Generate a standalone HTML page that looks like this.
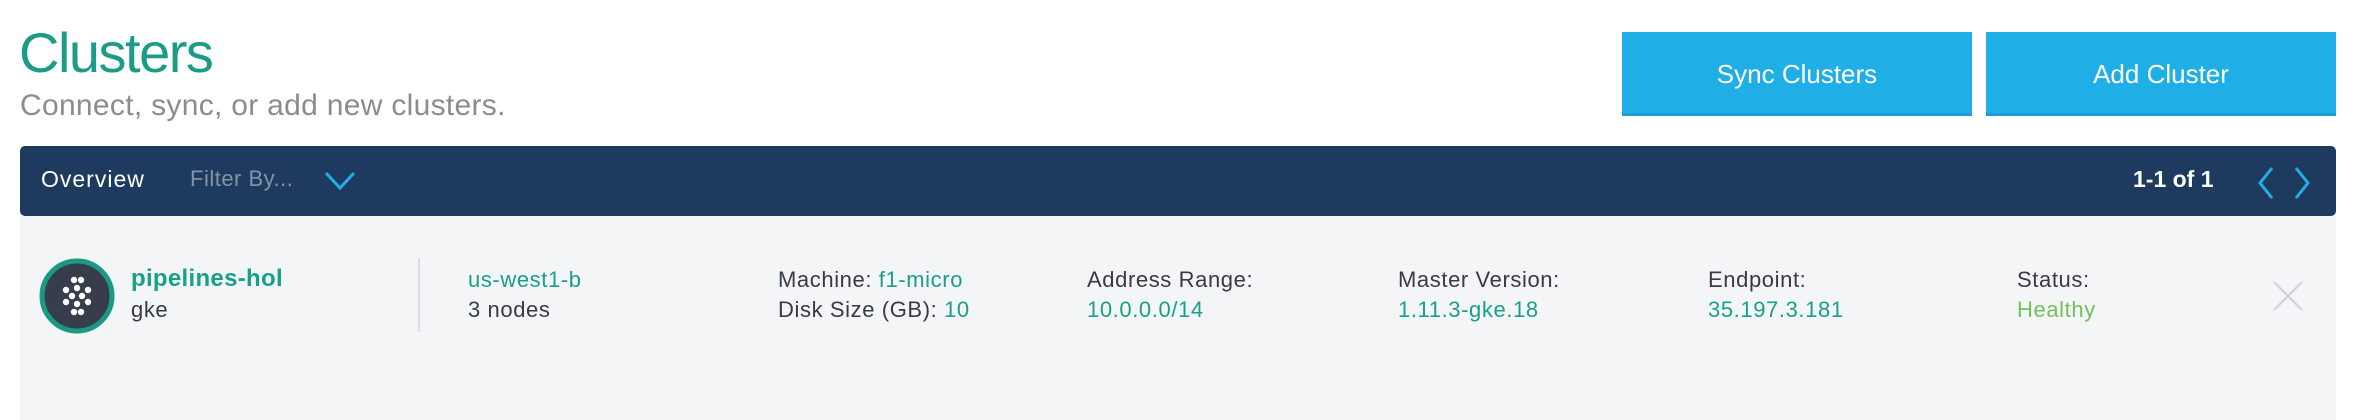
<!DOCTYPE html>
<html><head><meta charset="utf-8"><style>
*{margin:0;padding:0;box-sizing:border-box}
body{width:2360px;height:420px;background:#fff;font-family:"Liberation Sans","DejaVu Sans",sans-serif;position:relative;overflow:hidden;color:#363b45}
.a{position:absolute;white-space:nowrap}
.title{left:19px;top:20px;font-size:56px;color:#1c9c86;letter-spacing:-1.5px}
.sub{left:20px;top:89px;font-size:30px;color:#8b8b90;letter-spacing:0.3px}
.btn{top:32px;height:84px;width:350px;background:#20aee6;border-bottom:3px solid #1b9ed3;color:#fff;font-size:26px;text-align:center;line-height:84px}
.bar{left:20px;top:146px;width:2316px;height:70px;background:#1f3a5f;border-radius:5px}
.panel{left:20px;top:216px;width:2316px;height:204px;background:#f4f5f7}
.lbl{font-size:22px;line-height:30px;color:#363b45;letter-spacing:0.6px}
.t{color:#19a08a}
</style></head><body>
<div class="a title">Clusters</div>
<div class="a sub">Connect, sync, or add new clusters.</div>
<div class="a btn" style="left:1622px">Sync Clusters</div>
<div class="a btn" style="left:1986px">Add Cluster</div>
<div class="a bar"></div>
<div class="a" style="left:41px;top:166px;font-size:23px;color:#fff;letter-spacing:1px">Overview</div>
<div class="a" style="left:190px;top:166px;font-size:22px;color:#8493a8;letter-spacing:0.5px">Filter By...</div>
<svg class="a" style="left:324px;top:171px" width="32" height="20"><path d="M2 2 L16 17 L30 2" fill="none" stroke="#22aee6" stroke-width="3"/></svg>
<div class="a" style="left:2133px;top:166px;font-size:23px;color:#fff;font-weight:bold">1-1 of 1</div>
<svg class="a" style="left:2254px;top:166px" width="64" height="34"><path d="M18 2 L6 17 L18 32" fill="none" stroke="#22aee6" stroke-width="3"/><path d="M42 2 L54 17 L42 32" fill="none" stroke="#22aee6" stroke-width="3"/></svg>
<div class="a panel"></div>
<svg class="a" style="left:39px;top:258px" width="76" height="76"><circle cx="38" cy="38" r="35" fill="#373d4a" stroke="#1a9a84" stroke-width="5"/>
<g fill="#fff"><circle cx="35" cy="22" r="3.2"/><circle cx="42" cy="22" r="3.2"/><circle cx="38" cy="30" r="3.2"/><circle cx="27" cy="32" r="3.2"/><circle cx="49" cy="32" r="3.2"/><circle cx="33" cy="38" r="3.2"/><circle cx="43" cy="38" r="3.2"/><circle cx="27" cy="44" r="3.2"/><circle cx="49" cy="44" r="3.2"/><circle cx="38" cy="46" r="3.2"/><circle cx="35" cy="54" r="3.2"/><circle cx="42" cy="54" r="3.2"/></g></svg>
<div class="a lbl" style="left:131px;top:264px;font-size:24px;font-weight:bold;color:#19a08a;letter-spacing:0.3px">pipelines-hol</div>
<div class="a lbl" style="left:131px;top:295px">gke</div>
<div class="a" style="left:418px;top:258px;width:2px;height:74px;background:#dcdde0"></div>
<div class="a lbl" style="left:468px;top:265px"><span class="t">us-west1-b</span><br>3 nodes</div>
<div class="a lbl" style="left:778px;top:265px">Machine: <span class="t">f1-micro</span><br>Disk Size (GB): <span class="t">10</span></div>
<div class="a lbl" style="left:1087px;top:265px">Address Range:<br><span class="t">10.0.0.0/14</span></div>
<div class="a lbl" style="left:1398px;top:265px">Master Version:<br><span class="t">1.11.3-gke.18</span></div>
<div class="a lbl" style="left:1708px;top:265px">Endpoint:<br><span class="t">35.197.3.181</span></div>
<div class="a lbl" style="left:2017px;top:265px">Status:<br><span style="color:#74c05c">Healthy</span></div>
<svg class="a" style="left:2273px;top:281px" width="30" height="30"><path d="M1 1 L29 29 M29 1 L1 29" stroke="#cfd0d3" stroke-width="2"/></svg>
</body></html>
